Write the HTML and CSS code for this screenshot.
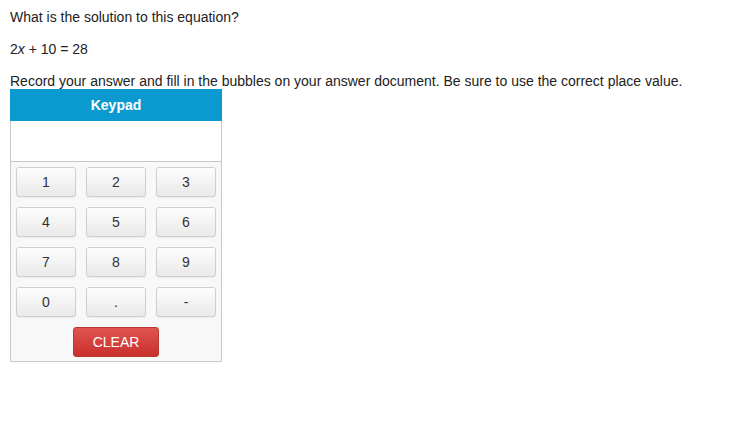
FILE: index.html
```html
<!DOCTYPE html>
<html>
<head>
<meta charset="utf-8">
<link rel="stylesheet" href="styles.css">
</head>
<body>
<div class="content">
  <p class="q">What is the solution to this equation?</p>
  <p class="q">2<i>x</i> + 10 = 28</p>
  <p class="q last">Record your answer and fill in the bubbles on your answer document. Be sure to use the correct place value.</p>
  <div class="keypad">
    <div class="kp-head">Keypad</div>
    <div class="kp-display"></div>
    <div class="kp-body">
      <div class="kp-grid">
        <button class="key">1</button>
        <button class="key">2</button>
        <button class="key">3</button>
        <button class="key">4</button>
        <button class="key">5</button>
        <button class="key">6</button>
        <button class="key">7</button>
        <button class="key">8</button>
        <button class="key">9</button>
        <button class="key">0</button>
        <button class="key">.</button>
        <button class="key">-</button>
      </div>
      <div class="kp-clear-row">
        <button class="clear">CLEAR</button>
      </div>
    </div>
  </div>
</div>
</body>
</html>
```
FILE: styles.css
```css
html, body {
  margin: 0;
  padding: 0;
  background: #fff;
}
body {
  font-family: "Liberation Sans", Arial, sans-serif;
  font-size: 14px;
  color: #222;
}
.content {
  padding: 9px 10px;
}
.q {
  margin: 0 0 15px;
  line-height: 17px;
}
.q.last {
  margin-bottom: -1px;
}
.keypad {
  width: 210px;
  border: 1px solid #c8c8c8;
  border-top: none;
  background: #f8f8f8;
}
.kp-head {
  height: 32px;
  line-height: 32px;
  margin: 0 -1px;
  background: #0b9acf;
  color: #fff;
  font-weight: bold;
  text-align: center;
  font-size: 14px;
}
.kp-display {
  height: 40px;
  background: #fff;
  border-bottom: 1px solid #c8c8c8;
}
.kp-body {
  padding: 5px 5px 4px;
}
.kp-grid {
  display: grid;
  grid-template-columns: repeat(3, 60px);
  column-gap: 10px;
  row-gap: 10px;
}
.key {
  height: 30px;
  padding: 0;
  margin: 0;
  font-family: "Liberation Sans", Arial, sans-serif;
  font-size: 14px;
  color: #333;
  border: 1px solid #cfcfcf;
  border-radius: 3px;
  background: linear-gradient(#fdfdfd, #e9e9e9);
  box-shadow: 0 1px 1px rgba(0,0,0,0.06);
}
.kp-clear-row {
  display: flex;
  justify-content: center;
  margin-top: 10px;
}
.clear {
  width: 86px;
  height: 30px;
  padding: 0;
  margin: 0;
  font-family: "Liberation Sans", Arial, sans-serif;
  font-size: 14px;
  color: #fff;
  border: 1px solid #b93632;
  border-radius: 3px;
  background: linear-gradient(#e05450, #c9302c);
}
```
